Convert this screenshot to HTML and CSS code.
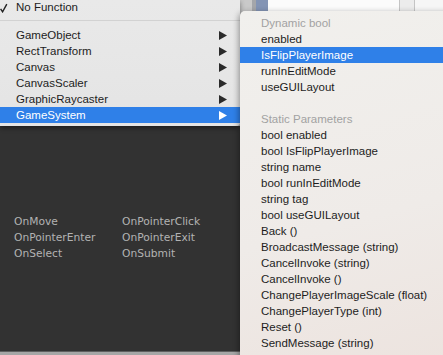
FILE: index.html
```html
<!DOCTYPE html>
<html lang="en">
<head>
    <meta charset="UTF-8">
    <meta name="viewport" content="width=device-width, initial-scale=1.0">
    <title>Event Function Menu</title>
    <link rel="stylesheet" href="styles.css">
</head>
<body>

    <div class="screen">
        <div class="top-area">
            <div class="strip strip-left"></div>
            <div class="strip strip-gray"></div>
            <div class="strip strip-edge"></div>
            <div class="strip strip-scroll"></div>
            <div class="strip strip-white"></div>
            <div class="strip strip-line"></div>
            <div class="strip strip-light"></div>
            <div class="strip strip-line"></div>
            <div class="strip strip-rest"></div>
        </div>

        <div class="inspector">
            <div class="event-grid">
                <span>OnMove</span>
                <span>OnPointerClick</span>
                <span>OnPointerEnter</span>
                <span>OnPointerExit</span>
                <span>OnSelect</span>
                <span>OnSubmit</span>
            </div>
        </div>

        <div class="footer-bar"></div>
    </div>

    <ul class="menu main-menu">
        <li class="item item-first">
            <span class="check">
                <svg width="8" height="10" viewBox="0 0 8 10"><path d="M0.6 5.8 L2.6 8.8 L6.8 1.2" fill="none" stroke="#222" stroke-width="1.4"/></svg>
            </span>No Function
        </li>
        <li class="separator"></li>
        <li class="item has-sub">GameObject<svg class="arrow" width="8" height="9" viewBox="0 0 8 9"><polygon points="0,0 8,4.5 0,9"/></svg></li>
        <li class="item has-sub">RectTransform<svg class="arrow" width="8" height="9" viewBox="0 0 8 9"><polygon points="0,0 8,4.5 0,9"/></svg></li>
        <li class="item has-sub">Canvas<svg class="arrow" width="8" height="9" viewBox="0 0 8 9"><polygon points="0,0 8,4.5 0,9"/></svg></li>
        <li class="item has-sub">CanvasScaler<svg class="arrow" width="8" height="9" viewBox="0 0 8 9"><polygon points="0,0 8,4.5 0,9"/></svg></li>
        <li class="item has-sub">GraphicRaycaster<svg class="arrow" width="8" height="9" viewBox="0 0 8 9"><polygon points="0,0 8,4.5 0,9"/></svg></li>
        <li class="item has-sub active">GameSystem<svg class="arrow" width="8" height="9" viewBox="0 0 8 9"><polygon points="0,0 8,4.5 0,9"/></svg></li>
    </ul>

    <ul class="menu sub-menu">
        <li class="item header">Dynamic bool</li>
        <li class="item">enabled</li>
        <li class="item active">IsFlipPlayerImage</li>
        <li class="item">runInEditMode</li>
        <li class="item">useGUILayout</li>
        <li class="spacer"></li>
        <li class="item header">Static Parameters</li>
        <li class="item">bool enabled</li>
        <li class="item">bool IsFlipPlayerImage</li>
        <li class="item">string name</li>
        <li class="item">bool runInEditMode</li>
        <li class="item">string tag</li>
        <li class="item">bool useGUILayout</li>
        <li class="item">Back ()</li>
        <li class="item">BroadcastMessage (string)</li>
        <li class="item">CancelInvoke (string)</li>
        <li class="item">CancelInvoke ()</li>
        <li class="item">ChangePlayerImageScale (float)</li>
        <li class="item">ChangePlayerType (int)</li>
        <li class="item">Reset ()</li>
        <li class="item">SendMessage (string)</li>
    </ul>

</body>
</html>
```

FILE: styles.css
```css
html, body {
    margin: 0;
    padding: 0;
    width: 443px;
    height: 355px;
    overflow: hidden;
}
body {
    position: relative;
    font-family: "Liberation Sans", Arial, sans-serif;
    background: #323232;
}
.screen {
    display: flex;
    flex-direction: column;
    height: 355px;
}
.top-area {
    display: flex;
    height: 126px;
    flex-shrink: 0;
}
.strip { height: 100%; }
.strip-left { width: 240px; background: #dcdcdc; }
.strip-gray { width: 12px; background: #c9c9c9; }
.strip-edge { width: 4px; background: #a4a6aa; }
.strip-scroll { width: 12px; background: #8394b4; }
.strip-white { width: 131px; background: #fbfbfb; }
.strip-line { width: 1px; background: #c4c4c4; }
.strip-light { width: 14px; background: #ececec; }
.strip-rest { flex: 1; background: #f6f6f6; }

.inspector {
    flex: 1;
    background: #323232;
    padding: 88px 0 0 14px;
}
.event-grid {
    display: grid;
    grid-template-columns: 108px auto;
    font-family: "DejaVu Sans", Verdana, sans-serif;
    font-size: 10.7px;
    line-height: 16px;
    color: #b2b2b2;
}
.footer-bar {
    height: 3px;
    border-top: 1px solid #5e5e5e;
    background: #a6a6a6;
    flex-shrink: 0;
}

.menu {
    position: absolute;
    list-style: none;
    margin: 0;
    padding: 0;
    font-size: 11.5px;
    color: #1d1d1d;
}
.menu .item {
    height: 16px;
    line-height: 16px;
    white-space: nowrap;
}
.menu .item.active {
    background: #2f80e8;
    color: #fff;
}
.main-menu {
    left: 0;
    top: 0;
    width: 240px;
    padding-bottom: 3px;
    background: linear-gradient(180deg, #e9e9e9, #e4e4e4);
    border-bottom-right-radius: 4px;
    box-shadow: 0 2px 5px rgba(0,0,0,0.45);
}
.main-menu .item {
    padding-left: 16px;
}
.main-menu .item-first {
    height: 15px;
    line-height: 15px;
    padding-left: 0;
    display: flex;
    align-items: center;
}
.check {
    display: inline-flex;
    width: 16px;
}
.separator {
    height: 12px;
    box-sizing: border-box;
    padding-top: 5px;
}
.separator:after {
    content: "";
    display: block;
    height: 1px;
    background: #d2d2d2;
}
.main-menu .has-sub {
    display: flex;
    align-items: center;
    justify-content: space-between;
    padding-right: 13px;
}
.arrow {
    fill: #2a2a2a;
}
.active .arrow {
    fill: #fff;
}
.sub-menu {
    left: 240px;
    top: 11px;
    width: 215px;
    height: 380px;
    padding-top: 4px;
    box-sizing: border-box;
    background: linear-gradient(165deg, #f1f0ed 0%, #efebe8 55%, #ece2dd 100%);
    border-top-left-radius: 5px;
    box-shadow: -1px 2px 6px rgba(0,0,0,0.4);
}
.sub-menu .item {
    padding-left: 21px;
}
.sub-menu .header {
    color: #a2a2a2;
}
.spacer {
    height: 16px;
}
```
